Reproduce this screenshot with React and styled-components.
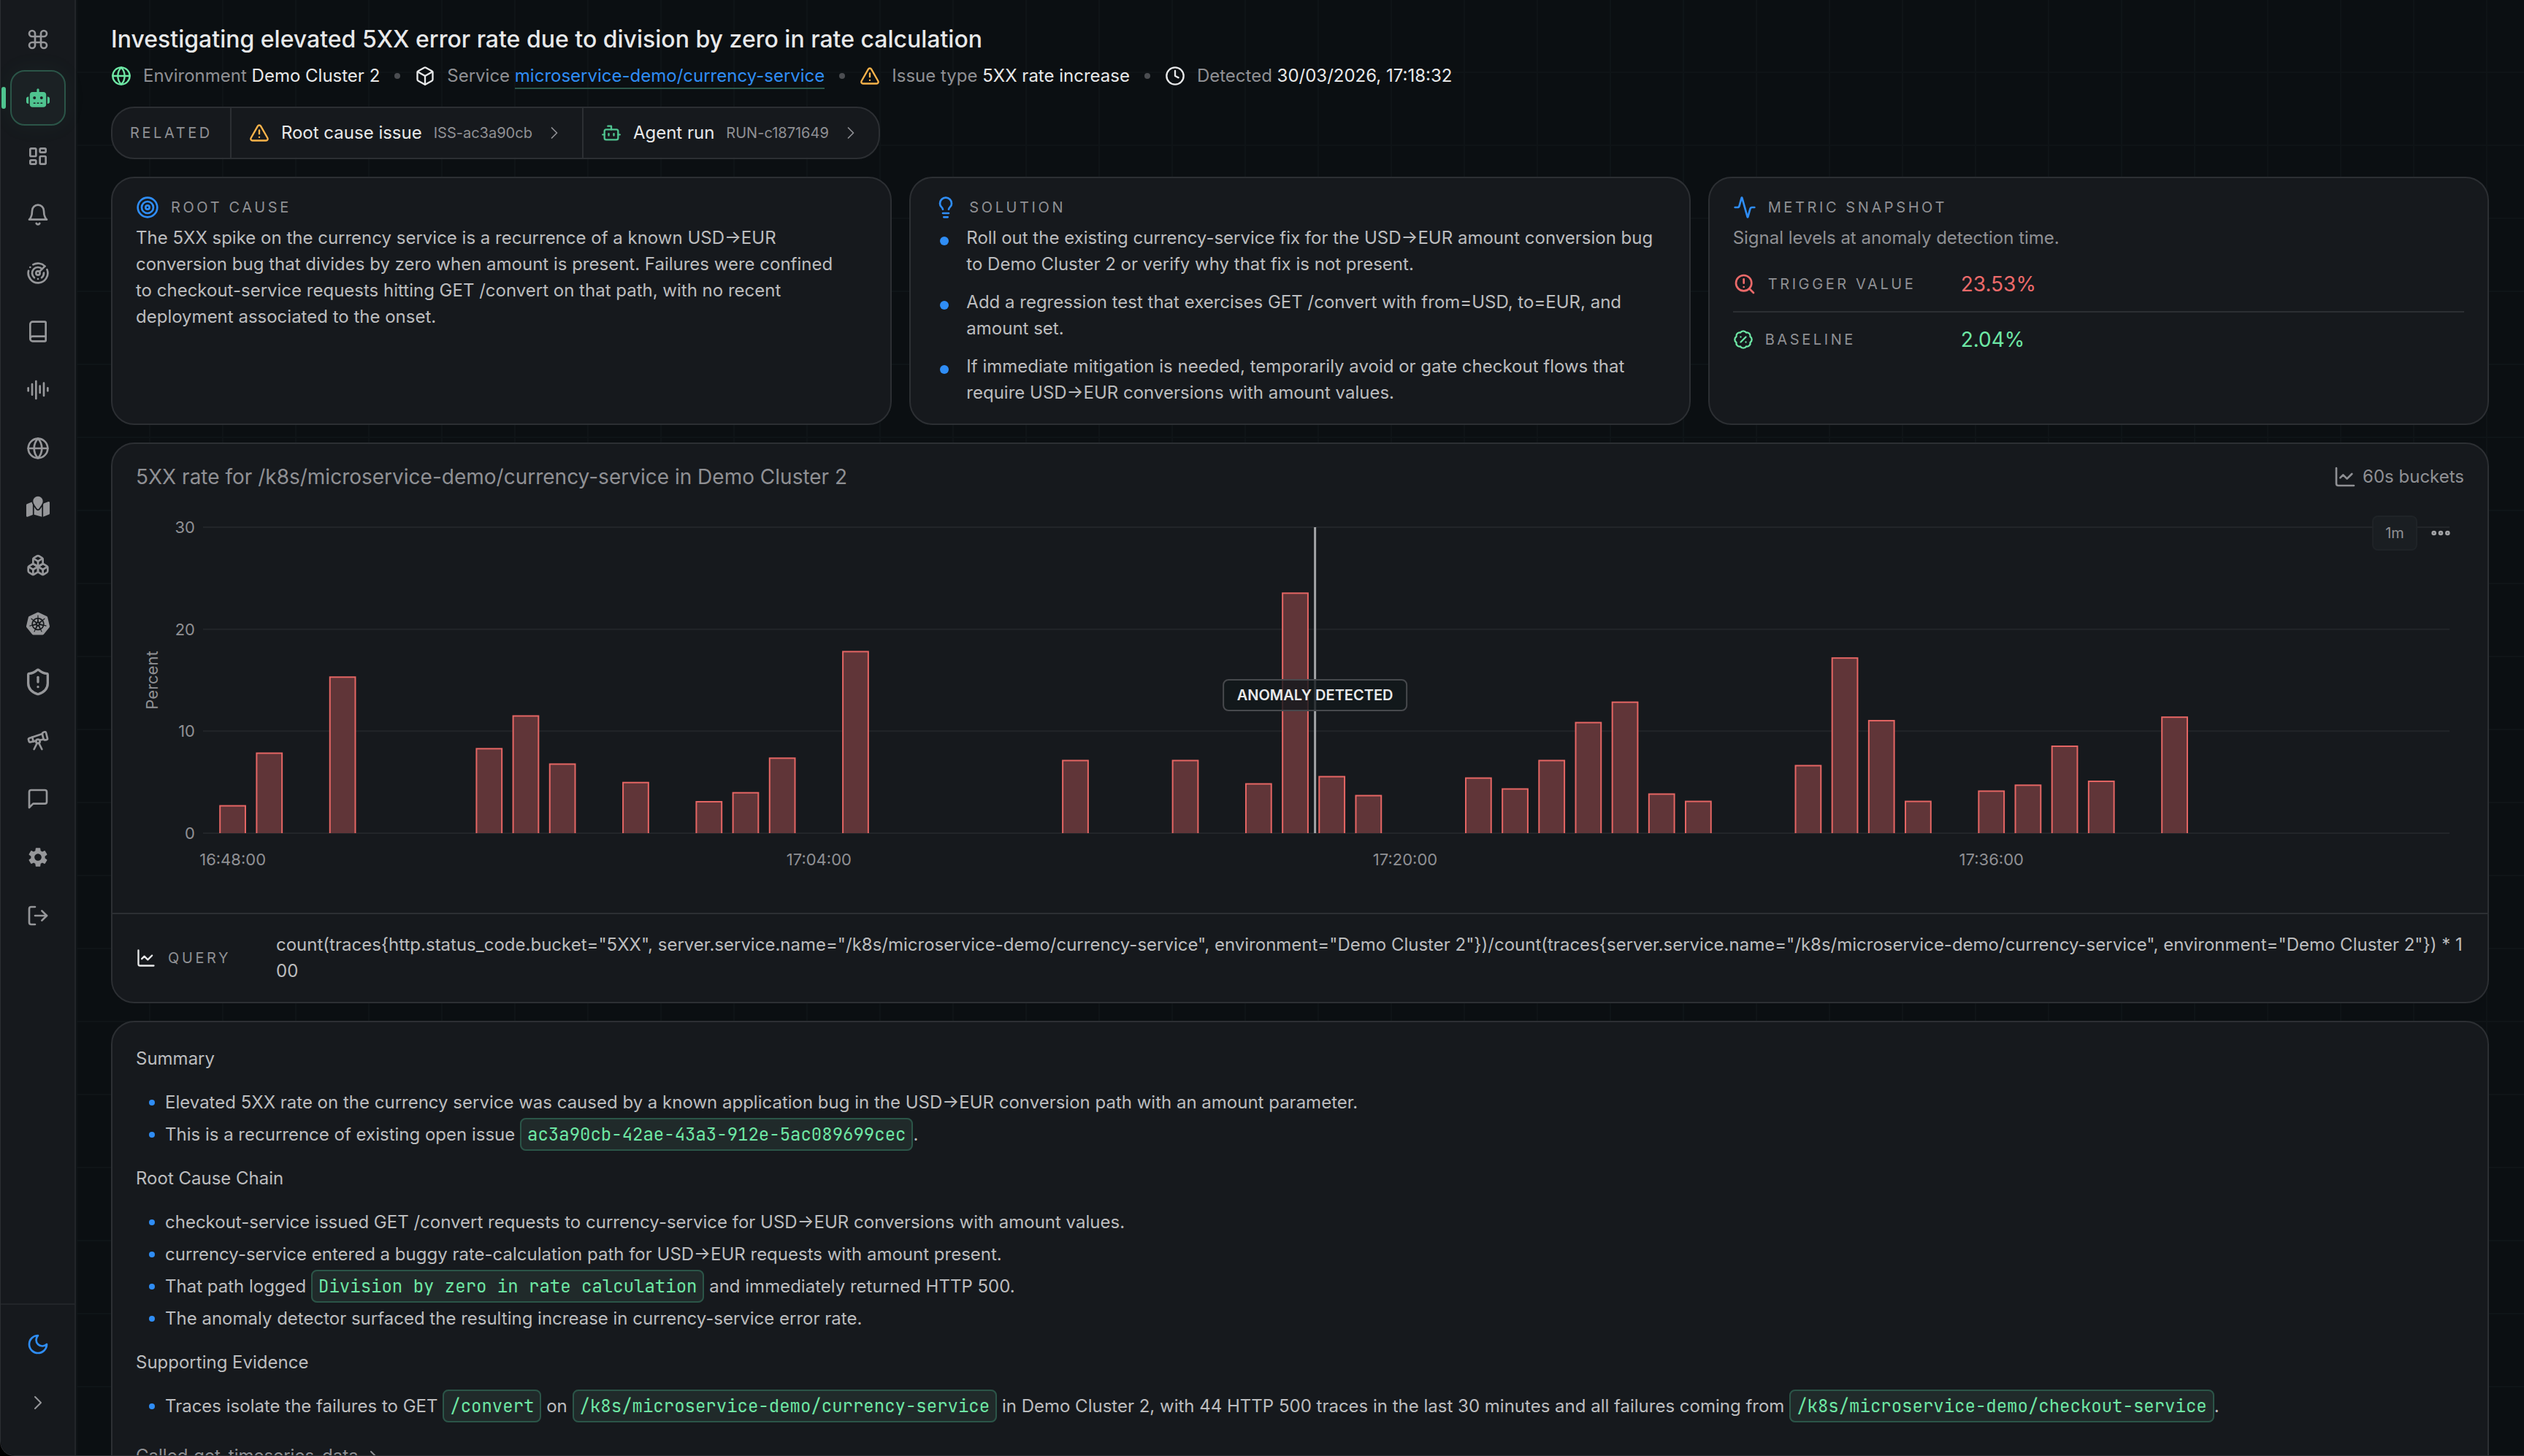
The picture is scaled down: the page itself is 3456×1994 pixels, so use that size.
import React from "react";
import styled, { createGlobalStyle, css } from "styled-components";
import { FaMapLocation, FaRobot } from "react-icons/fa6";
import { FiMessageSquare } from "react-icons/fi";
import {
  LuActivity,
  LuAudioLines,
  LuBadgePercent,
  LuBook,
  LuBot,
  LuBox,
  LuBoxes,
  LuChartLine,
  LuChevronRight,
  LuClock4,
  LuCommand,
  LuEllipsis,
  LuGlobe,
  LuLightbulb,
  LuLogOut,
  LuRadar,
  LuShieldAlert,
  LuTarget,
  LuTelescope,
  LuTriangleAlert,
} from "react-icons/lu";
import { MdSettings } from "react-icons/md";
import { SiKubernetes } from "react-icons/si";
import { TbLayoutDashboard } from "react-icons/tb";

const colors = {
  page: "#0b0f12",
  gridLine: "#0f1417",
  panel: "#16191d",
  border: "#2c2f33",
  softBorder: "#222529",
  white: "#e8e9ea",
  text: "#bcbdbf",
  muted: "#8f9094",
  blue: "#2f8df5",
  green: "#6ee7a5",
  emerald: "#4fc38f",
  emeraldLine: "#2b5548",
  amber: "#fdb44b",
  red: "#ec6a6a",
};

const LineIcon = ({ children }) => (
  <svg
    width="1em"
    height="1em"
    viewBox="0 0 24 24"
    fill="none"
    stroke="currentColor"
    strokeWidth="2"
    strokeLinecap="round"
    strokeLinejoin="round"
  >
    {children}
  </svg>
);

const BellIcon = () => (
  <LineIcon>
    <path d="M6 8a6 6 0 0 1 12 0c0 7 3 9 3 9H3s3-2 3-9" />
    <path d="M10.3 21a1.94 1.94 0 0 0 3.4 0" />
  </LineIcon>
);

const MoonIcon = () => (
  <LineIcon>
    <path d="M12 3a6 6 0 0 0 9 9 9 9 0 1 1-9-9Z" />
  </LineIcon>
);

const SearchAlertIcon = () => (
  <LineIcon>
    <circle cx="11" cy="11" r="8" />
    <path d="m21 21-4.3-4.3" />
    <path d="M11 7v4" />
    <path d="M11 15h.01" />
  </LineIcon>
);

const navItems = [
  { label: "Command menu", icon: <LuCommand /> },
  { label: "Agent", icon: <FaRobot />, active: true },
  { label: "Dashboards", icon: <TbLayoutDashboard /> },
  { label: "Alerts", icon: <BellIcon /> },
  { label: "Anomalies", icon: <LuRadar /> },
  { label: "Catalog", icon: <LuBook /> },
  { label: "Signals", icon: <LuAudioLines /> },
  { label: "Network", icon: <LuGlobe /> },
  { label: "Map", icon: <FaMapLocation /> },
  { label: "Services", icon: <LuBoxes /> },
  { label: "Kubernetes", icon: <SiKubernetes /> },
  { label: "Security", icon: <LuShieldAlert />, large: true },
  { label: "Explore", icon: <LuTelescope /> },
  { label: "Feedback", icon: <FiMessageSquare /> },
  { label: "Settings", icon: <MdSettings /> },
  { label: "Log out", icon: <LuLogOut /> },
];

const solutions = [
  "Roll out the existing currency-service fix for the USD→EUR amount conversion bug to Demo Cluster 2 or verify why that fix is not present.",
  "Add a regression test that exercises GET /convert with from=USD, to=EUR, and amount set.",
  "If immediate mitigation is needed, temporarily avoid or gate checkout flows that require USD→EUR conversions with amount values.",
];

// [minutes after 16:48, percent]
const bars = [
  [0, 2.68],
  [1, 7.84],
  [3, 15.3],
  [7, 8.28],
  [8, 11.49],
  [9, 6.77],
  [11, 4.96],
  [13, 3.08],
  [14, 3.96],
  [15, 7.35],
  [17, 17.8],
  [23, 7.12],
  [26, 7.12],
  [28, 4.83],
  [29, 23.53],
  [30, 5.54],
  [31, 3.68],
  [34, 5.4],
  [35, 4.33],
  [36, 7.12],
  [37, 10.84],
  [38, 12.84],
  [39, 3.83],
  [40, 3.11],
  [43, 6.62],
  [44, 17.17],
  [45, 11.03],
  [46, 3.11],
  [48, 4.12],
  [49, 4.7],
  [50, 8.52],
  [51, 5.08],
  [53, 11.37],
];

const ticks = [
  [0, "16:48:00"],
  [16, "17:04:00"],
  [32, "17:20:00"],
  [48, "17:36:00"],
];

const PLOT_TOP = 48;
const PLOT_HEIGHT = 419;
const xAt = (minute) => 1.32 + minute * 1.631;
const yAt = (value) => PLOT_TOP + PLOT_HEIGHT * (1 - value / 30);

const NavItem = ({ label, icon, active, large }) => (
  <NavButton type="button" aria-label={label} $active={active} $large={large}>
    {icon}
  </NavButton>
);

const Meta = ({ icon, tone, label, children }) => (
  <MetaItem>
    <MetaIcon $tone={tone}>{icon}</MetaIcon>
    <span>
      {label} {children}
    </span>
  </MetaItem>
);

const Related = ({ icon, tone, title, id }) => (
  <RelatedLink href="#">
    <MetaIcon $tone={tone}>{icon}</MetaIcon>
    <span>{title}</span>
    <RelatedId>{id}</RelatedId>
    <Chevron>
      <LuChevronRight strokeWidth={1.5} />
    </Chevron>
  </RelatedLink>
);

const InsightCard = ({ icon, title, children }) => (
  <Card>
    <CardHeader>
      {icon}
      <Label as="h2">{title}</Label>
    </CardHeader>
    {children}
  </Card>
);

const RateChart = () => (
  <ChartArea>
    <Plot role="img" aria-label="5XX rate in percent per minute">
      {[0, 10, 20, 30].map((value) => (
        <React.Fragment key={value}>
          <GridLine x1="0" x2="100%" y1={yAt(value)} y2={yAt(value)} />
          <AxisText x="-11" y={yAt(value) + 8} textAnchor="end">
            {value}
          </AxisText>
        </React.Fragment>
      ))}
      <AxisText
        transform={`translate(-62 ${PLOT_TOP + PLOT_HEIGHT / 2}) rotate(-90)`}
        textAnchor="middle"
      >
        Percent
      </AxisText>
      <svg width="100%" height={PLOT_TOP + PLOT_HEIGHT}>
        {bars.map(([minute, value]) => (
          <Bar
            key={minute}
            x={`${xAt(minute) - 0.565}%`}
            y={yAt(value)}
            width="1.13%"
            height={PLOT_HEIGHT}
          />
        ))}
      </svg>
      <MarkerLine
        x1="49.5%"
        x2="49.5%"
        y1={PLOT_TOP}
        y2={PLOT_TOP + PLOT_HEIGHT}
      />
      {ticks.map(([minute, text]) => (
        <AxisText
          key={text}
          x={`${xAt(minute)}%`}
          y={PLOT_TOP + PLOT_HEIGHT + 44}
          textAnchor="middle"
        >
          {text}
        </AxisText>
      ))}
    </Plot>
    <MarkerLayer>
      <MarkerLabel>ANOMALY DETECTED</MarkerLabel>
    </MarkerLayer>
    <ChartTools>
      <IntervalButton type="button">1m</IntervalButton>
      <MoreButton type="button" aria-label="More options">
        <LuEllipsis strokeWidth={3} />
      </MoreButton>
    </ChartTools>
  </ChartArea>
);

const App = () => {
  return (
    <>
      <GlobalStyle />
      <Shell>
        <Sidebar>
          <NavGroup>
            {navItems.map((item) => (
              <NavItem key={item.label} {...item} />
            ))}
          </NavGroup>
          <NavFooter>
            <NavButton type="button" aria-label="Dark theme" $tone={colors.blue}>
              <MoonIcon />
            </NavButton>
            <NavButton type="button" aria-label="Expand sidebar">
              <LuChevronRight strokeWidth={1.5} />
            </NavButton>
          </NavFooter>
        </Sidebar>
        <Main>
          <header>
            <Title>
              Investigating elevated 5XX error rate due to division by zero in
              rate calculation
            </Title>
            <MetaRow>
              <Meta icon={<LuGlobe />} tone={colors.green} label="Environment">
                <Strong>Demo Cluster 2</Strong>
              </Meta>
              <Dot />
              <Meta icon={<LuBox />} tone={colors.white} label="Service">
                <ServiceLink href="#">
                  microservice-demo/currency-service
                </ServiceLink>
              </Meta>
              <Dot />
              <Meta
                icon={<LuTriangleAlert />}
                tone={colors.amber}
                label="Issue type"
              >
                <Strong>5XX rate increase</Strong>
              </Meta>
              <Dot />
              <Meta icon={<LuClock4 />} tone={colors.white} label="Detected">
                <Strong>30/03/2026, 17:18:32</Strong>
              </Meta>
            </MetaRow>
          </header>

          <RelatedBar>
            <RelatedLabel>RELATED</RelatedLabel>
            <Related
              icon={<LuTriangleAlert />}
              tone={colors.amber}
              title="Root cause issue"
              id="ISS-ac3a90cb"
            />
            <Related
              icon={<LuBot />}
              tone={colors.emerald}
              title="Agent run"
              id="RUN-c1871649"
            />
          </RelatedBar>

          <Insights>
            <InsightCard icon={<LuTarget />} title="ROOT CAUSE">
              <Body>
                The 5XX spike on the currency service is a recurrence of a known
                USD→EUR conversion bug that divides by zero when amount is
                present. Failures were confined to checkout-service requests
                hitting GET /convert on that path, with no recent deployment
                associated to the onset.
              </Body>
            </InsightCard>
            <InsightCard icon={<LuLightbulb />} title="SOLUTION">
              <SolutionList>
                {solutions.map((text) => (
                  <Solution key={text}>{text}</Solution>
                ))}
              </SolutionList>
            </InsightCard>
            <InsightCard icon={<LuActivity />} title="METRIC SNAPSHOT">
              <Body $muted>Signal levels at anomaly detection time.</Body>
              <Metrics>
                <Metric $tone={colors.red}>
                  <MetricName $size={32}>
                    <SearchAlertIcon />
                    <Label>TRIGGER VALUE</Label>
                  </MetricName>
                  <MetricValue>23.53%</MetricValue>
                </Metric>
                <Metric $tone={colors.green}>
                  <MetricName $size={28}>
                    <LuBadgePercent />
                    <Label>BASELINE</Label>
                  </MetricName>
                  <MetricValue>2.04%</MetricValue>
                </Metric>
              </Metrics>
            </InsightCard>
          </Insights>

          <ChartCard>
            <ChartHeader>
              <ChartTitle>
                5XX rate for /k8s/microservice-demo/currency-service in Demo
                Cluster 2
              </ChartTitle>
              <Buckets>
                <LuChartLine />
                60s buckets
              </Buckets>
            </ChartHeader>
            <RateChart />
            <QueryRow>
              <QueryName>
                <LuChartLine />
                <Label>QUERY</Label>
              </QueryName>
              <QueryText>
                {
                  'count(traces{http.status_code.bucket="5XX", server.service.name="/k8s/microservice-demo/currency-service", environment="Demo Cluster 2"})/count(traces{server.service.name="/k8s/microservice-demo/currency-service", environment="Demo Cluster 2"}) * 100'
                }
              </QueryText>
            </QueryRow>
          </ChartCard>

          <Report>
            <ReportHeading>Summary</ReportHeading>
            <ReportList>
              <ReportItem>
                <span>
                  Elevated 5XX rate on the currency service was caused by a
                  known application bug in the USD→EUR conversion path with an
                  amount parameter.
                </span>
              </ReportItem>
              <ReportItem>
                <span>
                  This is a recurrence of existing open issue{" "}
                  <Code>ac3a90cb-42ae-43a3-912e-5ac089699cec</Code>.
                </span>
              </ReportItem>
            </ReportList>
            <ReportHeading>Root Cause Chain</ReportHeading>
            <ReportList>
              <ReportItem>
                <span>
                  checkout-service issued GET /convert requests to
                  currency-service for USD→EUR conversions with amount values.
                </span>
              </ReportItem>
              <ReportItem>
                <span>
                  currency-service entered a buggy rate-calculation path for
                  USD→EUR requests with amount present.
                </span>
              </ReportItem>
              <ReportItem>
                <span>
                  That path logged{" "}
                  <Code>Division by zero in rate calculation</Code> and
                  immediately returned HTTP 500.
                </span>
              </ReportItem>
              <ReportItem>
                <span>
                  The anomaly detector surfaced the resulting increase in
                  currency-service error rate.
                </span>
              </ReportItem>
            </ReportList>
            <ReportHeading>Supporting Evidence</ReportHeading>
            <ReportList>
              <ReportItem>
                <span>
                  Traces isolate the failures to GET <Code>/convert</Code> on{" "}
                  <Code>/k8s/microservice-demo/currency-service</Code> in Demo
                  Cluster 2, with 44 HTTP 500 traces in the last 30 minutes and
                  all failures coming from{" "}
                  <Code>/k8s/microservice-demo/checkout-service</Code>.
                </span>
              </ReportItem>
            </ReportList>
            <ToolCall type="button">
              <span>Called</span>
              <span>get_timeseries_data</span>
              <LuChevronRight />
            </ToolCall>
          </Report>
        </Main>
      </Shell>
    </>
  );
};

const GlobalStyle = createGlobalStyle`
  * {
    box-sizing: border-box;
  }
  body {
    margin: 0;
    background: #000;
    color: ${colors.text};
    font-family: Inter, "Liberation Sans", sans-serif;
    font-size: 24px;
    line-height: 36px;
  }
  h1, h2, h3, p, ul {
    margin: 0;
    padding: 0;
    font-weight: 400;
  }
  ul {
    list-style: none;
  }
  button {
    border: 0;
    padding: 0;
    background: none;
    color: inherit;
    font: inherit;
    cursor: pointer;
  }
  svg {
    flex-shrink: 0;
  }
`;

const Shell = styled.div`
  display: flex;
  height: 100vh;
  border: solid ${colors.border};
  border-width: 0 0 1px 1px;
  border-bottom-left-radius: 20px;
  overflow: hidden;
`;

const Sidebar = styled.nav`
  display: flex;
  flex-direction: column;
  justify-content: space-between;
  flex: 0 0 103px;
  border-right: 2px solid ${colors.softBorder};
  background: ${colors.panel};
`;

const NavGroup = styled.div`
  display: flex;
  flex-direction: column;
  align-items: center;
  gap: 4px;
  padding-top: 16px;
`;

const NavFooter = styled(NavGroup)`
  padding: 16px 0 34px;
  border-top: 2px solid ${colors.softBorder};
`;

const NavButton = styled.button`
  position: relative;
  display: flex;
  align-items: center;
  justify-content: center;
  width: 76px;
  height: 76px;
  border: 2px solid transparent;
  border-radius: 20px;
  font-size: ${(props) => (props.$large ? 40 : 32)}px;
  color: ${(props) => props.$tone || "#96979a"};
  ${(props) =>
    props.$active &&
    css`
      color: ${colors.emerald};
      border-color: ${colors.emeraldLine};
      background: #1b2124;
      box-shadow: 0 0 32px rgba(79, 195, 143, 0.06);
      &::before {
        content: "";
        position: absolute;
        left: -14px;
        width: 6px;
        height: 30px;
        border-radius: 3px;
        background: ${colors.emerald};
      }
    `}
`;

const Main = styled.main`
  flex: 1;
  min-width: 0;
  display: flex;
  flex-direction: column;
  gap: 24px;
  padding: 34px 48px 48px;
  overflow: hidden;
  background: linear-gradient(to right, ${colors.gridLine} 2px, transparent 2px)
      0 0 / 100px 100px,
    linear-gradient(to bottom, transparent 98px, ${colors.gridLine} 98px) 0 0 /
      100px 100px,
    ${colors.page};
  > * {
    flex-shrink: 0;
  }
`;

const Title = styled.h1`
  margin-bottom: 12px;
  font-size: 32px;
  line-height: 40px;
  font-weight: 500;
  color: ${colors.white};
`;

const MetaRow = styled.div`
  display: flex;
  align-items: center;
  gap: 20px;
`;

const MetaItem = styled.div`
  display: flex;
  align-items: center;
  gap: 16px;
  color: ${colors.muted};
`;

const MetaIcon = styled.span`
  display: flex;
  font-size: 28px;
  color: ${(props) => props.$tone};
`;

const Strong = styled.span`
  color: ${colors.white};
`;

const Dot = styled.span`
  width: 8px;
  height: 8px;
  border-radius: 50%;
  background: #4b4d51;
`;

const ServiceLink = styled.a`
  padding-bottom: 2px;
  border-bottom: 2px solid ${colors.emeraldLine};
  color: ${colors.blue};
  text-decoration: none;
`;

const Label = styled.span`
  font-size: 20px;
  line-height: 32px;
  letter-spacing: 0.18em;
  color: ${colors.muted};
`;

const RelatedBar = styled.div`
  display: flex;
  align-self: flex-start;
  height: 72px;
  border: 2px solid ${colors.border};
  border-radius: 32px;
  background: ${colors.panel};
`;

const RelatedLabel = styled(Label)`
  display: flex;
  align-items: center;
  padding: 0 24px;
`;

const RelatedLink = styled.a`
  display: flex;
  align-items: center;
  gap: 16px;
  padding: 0 24px;
  border-left: 2px solid ${colors.border};
  color: ${colors.white};
  text-decoration: none;
`;

const RelatedId = styled.span`
  font-size: 20px;
  color: ${colors.muted};
`;

const Chevron = styled.span`
  display: flex;
  font-size: 28px;
  color: ${colors.muted};
`;

const Insights = styled.section`
  display: grid;
  grid-template-columns: repeat(3, 1fr);
  gap: 24px;
`;

const Card = styled.article`
  padding: 24px 32px;
  border: 2px solid ${colors.border};
  border-radius: 32px;
  background: ${colors.panel};
`;

const CardHeader = styled.div`
  display: flex;
  align-items: center;
  gap: 16px;
  margin-bottom: 8px;
  > svg {
    font-size: 32px;
    color: ${colors.blue};
  }
`;

const Body = styled.p`
  max-width: 960px;
  color: ${(props) => (props.$muted ? colors.muted : colors.text)};
`;

const SolutionList = styled.ul`
  display: flex;
  flex-direction: column;
  gap: 16px;
  padding-left: 8px;
`;

const Solution = styled.li`
  display: flex;
  gap: 24px;
  &::before {
    content: "";
    flex: 0 0 12px;
    height: 12px;
    margin-top: 16px;
    border-radius: 50%;
    background: ${colors.blue};
  }
`;

const Metrics = styled.div`
  margin-top: 8px;
`;

const Metric = styled.div`
  display: grid;
  grid-template-columns: 280px 1fr;
  align-items: center;
  gap: 32px;
  padding: 16px 0;
  color: ${(props) => props.$tone};
  & + & {
    border-top: 2px solid ${colors.border};
  }
`;

const MetricName = styled.div`
  display: flex;
  align-items: center;
  gap: 16px;
  > svg {
    font-size: ${(props) => props.$size}px;
  }
`;

const MetricValue = styled.span`
  font-size: 28px;
  line-height: 42px;
`;

const ChartCard = styled(Card)`
  padding: 24px 0 0;
`;

const ChartHeader = styled.div`
  display: flex;
  align-items: center;
  justify-content: space-between;
  padding: 0 32px;
  color: ${colors.muted};
`;

const ChartTitle = styled.h2`
  font-size: 28px;
  line-height: 42px;
`;

const Buckets = styled.div`
  display: flex;
  align-items: center;
  gap: 8px;
  > svg {
    font-size: 32px;
  }
`;

const ChartArea = styled.div`
  position: relative;
  height: 576px;
  padding: 0 52px 0 124px;
`;

const Plot = styled.svg`
  display: block;
  width: 100%;
  height: 100%;
  overflow: visible;
`;

const GridLine = styled.line`
  stroke: ${colors.softBorder};
  stroke-width: 2;
`;

const AxisText = styled.text`
  font-size: 22px;
  fill: ${colors.muted};
`;

const Bar = styled.rect`
  fill: #603538;
  stroke: #e56664;
  stroke-width: 2;
`;

const MarkerLine = styled.line`
  stroke: #a3a4a7;
  stroke-width: 3;
`;

const MarkerLayer = styled.div`
  position: absolute;
  top: 256px;
  left: 124px;
  right: 52px;
`;

const MarkerLabel = styled.span`
  position: absolute;
  left: 49.5%;
  transform: translateX(-50%);
  padding: 0 18px;
  border: 2px solid #47494d;
  border-radius: 8px;
  background: rgba(18, 24, 27, 0.8);
  font-size: 20px;
  line-height: 40px;
  font-weight: 600;
  white-space: nowrap;
  color: ${colors.white};
`;

const ChartTools = styled.div`
  position: absolute;
  top: 32px;
  right: 48px;
  display: flex;
  align-items: center;
  gap: 16px;
`;

const IntervalButton = styled.button`
  width: 62px;
  height: 48px;
  border: 2px solid #1f2327;
  border-radius: 8px;
  background: #1a1e22;
  font-size: 20px;
  color: ${colors.muted};
`;

const MoreButton = styled.button`
  display: flex;
  font-size: 32px;
  color: #a3a4a7;
`;

const QueryRow = styled.div`
  display: grid;
  grid-template-columns: 168px 1fr;
  align-items: center;
  gap: 24px;
  padding: 24px 32px;
  border-top: 2px solid ${colors.border};
`;

const QueryName = styled.div`
  display: flex;
  align-items: center;
  gap: 16px;
  color: ${colors.white};
  > svg {
    font-size: 28px;
  }
`;

const QueryText = styled.p`
  word-break: break-all;
`;

const Report = styled(Card)`
  padding: 32px;
`;

const ReportHeading = styled.h3`
  font-size: 24px;
  margin-bottom: 20px;
`;

const ReportList = styled.ul`
  margin-bottom: 20px;
`;

const ReportItem = styled.li`
  display: flex;
  align-items: center;
  gap: 14px;
  padding-left: 18px;
  line-height: 44px;
  &::before {
    content: "";
    flex: 0 0 8px;
    height: 8px;
    border-radius: 50%;
    background: ${colors.blue};
  }
`;

const Code = styled.code`
  padding: 5px 8px;
  border: 2px solid ${colors.emeraldLine};
  border-radius: 8px;
  background: #202a2a;
  font-family: "JetBrains Mono", "DejaVu Sans Mono", monospace;
  font-size: 24px;
  color: ${colors.green};
`;

const ToolCall = styled.button`
  display: flex;
  align-items: center;
  gap: 8px;
  padding: 8px 0;
  color: ${colors.muted};
`;

export default App;
